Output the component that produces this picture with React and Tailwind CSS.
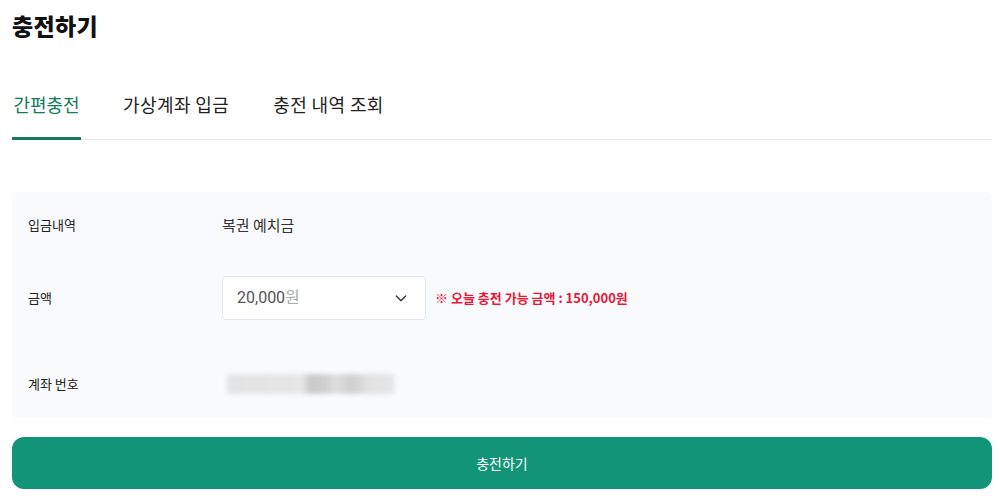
export default function App() {
  return (
    <div className="w-[1000px] h-[502px] bg-white overflow-hidden" style={{ fontFamily: '"Noto Sans CJK KR", "Noto Sans", sans-serif' }}>
      <div className="pl-3 pr-2">
        <h1 className="text-[23px] font-black text-[#111] leading-[26px] pt-[12px] tracking-[0.3px]">충전하기</h1>
        <div className="mt-[52px] flex border-b border-[#e5e7eb] h-[50px]">
          <div className="w-[69px] flex flex-col items-center justify-between">
            <span className="text-[18px] text-[#137a5b] leading-[26px] pt-[1px]">간편충전</span>
            <div className="h-[3px] w-full bg-[#137a5b] mb-[-1px]"></div>
          </div>
          <div className="ml-[42px] text-[18px] text-[#222] leading-[26px] pt-[1px] tracking-[0.4px]">가상계좌 입금</div>
          <div className="ml-[44px] text-[18px] text-[#222] leading-[26px] pt-[1px] tracking-[0.4px]">충전 내역 조회</div>
        </div>
        <div className="mt-[52px] bg-[#f9fafb] rounded-[4px] h-[226px] px-4 pt-[19px]">
          <div className="flex items-center h-[28px]">
            <div className="w-[194px] text-[13px] text-[#222]">입금내역</div>
            <div className="text-[15px] text-[#333]">복권 예치금</div>
          </div>
          <div className="flex items-center mt-[37px] h-[44px]">
            <div className="w-[194px] text-[13px] text-[#222]">금액</div>
            <div className="w-[204px] h-[44px] bg-white border border-[#e6e7ea] rounded-[4px] flex items-center justify-between pl-[14px] pr-[16px]">
              <span className="text-[16px] text-[#555]" style={{ fontFamily: 'Roboto, "Noto Sans CJK KR", sans-serif' }}>20,000<span className="text-[#aaa]">원</span></span>
              <svg width="16" height="16" viewBox="0 0 24 24" fill="none" stroke="#333" strokeWidth="2" strokeLinecap="round" strokeLinejoin="round"><path d="M5 9l7 7 7-7" /></svg>
            </div>
            <div className="ml-[9px] text-[13px] font-semibold text-[#e8173a]">※ 오늘 충전 가능 금액 : 150,000원</div>
          </div>
          <div className="flex items-center mt-[50px] h-[28px]">
            <div className="w-[194px] text-[13px] text-[#222]">계좌 번호</div>
            <div className="ml-[5px] w-[167px] h-[20px] rounded-[3px] blur-[2px]" style={{ background: 'linear-gradient(90deg,#e3e3e3 0%,#e6e6e6 45%,#c9c9c9 50%,#cfcfcf 58%,#dedede 65%,#cfcfcf 75%,#e2e2e2 85%,#e4e4e4 100%)' }}></div>
          </div>
        </div>
        <button className="mt-[19px] w-full h-[52px] bg-[#129479] rounded-[12px] text-white text-[14px]">충전하기</button>
      </div>
    </div>
  );
}
